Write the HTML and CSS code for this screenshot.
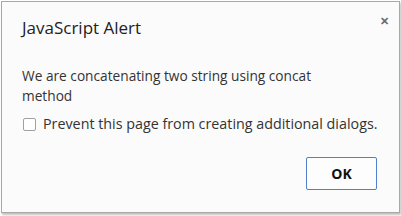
FILE: index.html
```html
<!DOCTYPE html>
<html>
<head>
<meta charset="utf-8">
<link rel="stylesheet" href="styles.css">
</head>
<body>
<div class="dialog">
  <div class="header">
    <div class="title">JavaScript Alert</div>
    <div class="close">&#x2715;</div>
  </div>
  <div class="message">We are concatenating two string using concat method</div>
  <label class="option"><span class="checkbox"></span><span>Prevent this page from creating additional dialogs.</span></label>
  <div class="footer"><button class="ok">OK</button></div>
</div>
</body>
</html>
```
FILE: styles.css
```css
html, body { margin: 0; padding: 0; background: #ffffff; }
body { width: 401px; height: 216px; overflow: hidden; font-family: "Open Sans", "Noto Sans", sans-serif; }
.dialog {
  box-sizing: border-box;
  margin: 1px 0 0 1px;
  width: 399px;
  height: 212px;
  background: #fbfbfb;
  border: 1px solid #a8a8a8;
  box-shadow: 1px 2px 2px rgba(0,0,0,0.25);
  display: flex;
  flex-direction: column;
  padding: 0 21px 0 20px;
}
.header { display: flex; justify-content: space-between; align-items: flex-start; height: 44px; }
.title { font-size: 17px; color: #222; margin-top: 16px; line-height: 20px; }
.close { font-size: 11px; font-weight: bold; color: #6a6a6a; margin-top: 11px; margin-right: -11px; }
.message { font-size: 13.7px; line-height: 20px; color: #333; margin-top: 20px; width: 320px; }
.option { display: flex; align-items: center; gap: 7px; font-size: 14.3px; color: #333; margin-top: 8px; line-height: 20px; }
.checkbox { width: 11px; height: 11px; border: 1px solid #a0a0a0; border-radius: 2px; background: #fff; margin-left: 1px; flex: none; }
.option span:last-child { white-space: nowrap; }
.footer { display: flex; justify-content: flex-end; margin-top: 23px; }
.ok {
  width: 71px; height: 33px; margin-right: 1px;
  border: 1px solid #4f7fcd; border-radius: 2px; background: #fdfdfd;
  font-family: "Open Sans", sans-serif; font-weight: bold; font-size: 14px; color: #111;
}
```
